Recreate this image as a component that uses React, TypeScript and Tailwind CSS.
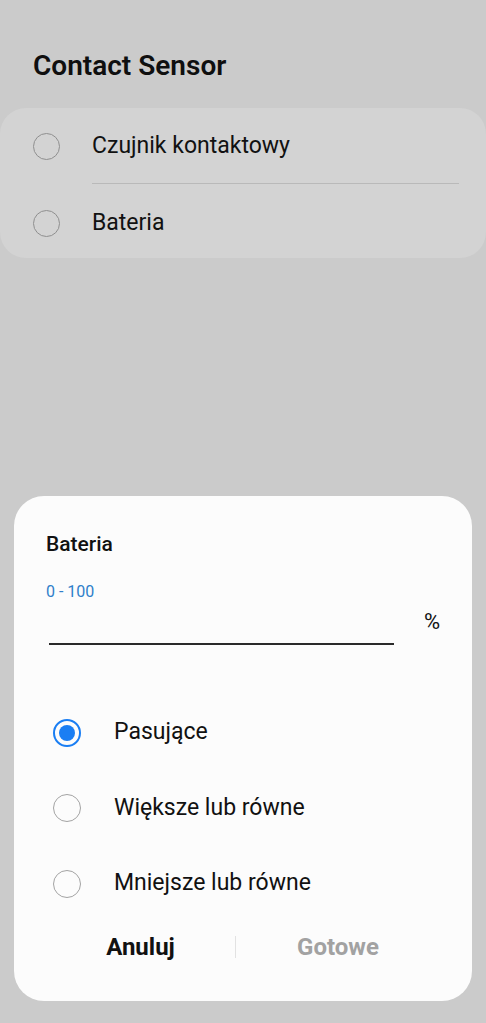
import React from "react";

const font = { fontFamily: "Roboto, 'Noto Sans', 'Liberation Sans', sans-serif" };

function Radio({ checked, dim }: { checked?: boolean; dim?: boolean }) {
  if (checked) {
    return (
      <div className="w-[28px] h-[28px] rounded-full border-2 border-[#1a7ef3] flex items-center justify-center shrink-0">
        <div className="w-[16px] h-[16px] rounded-full bg-[#1a7ef3]" />
      </div>
    );
  }
  return (
    <div
      className={
        "rounded-full border-[1.5px] shrink-0 " +
        (dim ? "w-[27px] h-[27px] border-[#8f8f8f]" : "w-[28px] h-[28px] border-[#a3a3a3]")
      }
    />
  );
}

export default function App() {
  return (
    <div className="w-[486px] h-[1023px] bg-[#cbcbcb] flex flex-col overflow-hidden" style={font}>
      <div className="pt-[48px] pl-[33px] h-[108px]">
        <div className="text-[28px] leading-[36px] font-semibold text-[#0f0f0f]">Contact Sensor</div>
      </div>

      <div className="mx-0 bg-[#d3d3d3] rounded-[26px] h-[150px] flex flex-col">
        <div className="flex items-center h-[75px] pl-[33px] pt-[2px]">
          <Radio dim />
          <div className="ml-[32px] text-[23px] text-[#111]">Czujnik kontaktowy</div>
        </div>
        <div className="ml-[92px] mr-[27px] h-[1px] bg-[#b9b9b9]" />
        <div className="flex items-center h-[74px] pl-[33px] pt-[4px]">
          <Radio dim />
          <div className="ml-[32px] text-[23px] text-[#111]">Bateria</div>
        </div>
      </div>

      <div className="mt-[238px] mx-[14px] bg-[#fcfcfc] rounded-[30px] h-[505px] flex flex-col px-[32px]">
        <div className="pt-[35px] text-[21px] leading-[26px] font-medium text-[#111]">Bateria</div>
        <div className="mt-[25px] text-[16px] leading-[20px] text-[#2f7fca]">0 - 100</div>
        <div className="flex items-end h-[43px]">
          <div className="ml-[3px] w-[345px] h-[2px] bg-[#2a2a2a]" />
          <div className="ml-auto mb-[10px] text-[22px] leading-[26px] text-[#111]">%</div>
        </div>

        <div className="mt-[50px] flex flex-col">
          <div className="flex items-center h-[75px] pl-[7px]">
            <Radio checked />
            <div className="ml-[33px] text-[23px] text-[#111]">Pasujące</div>
          </div>
          <div className="flex items-center h-[76px] pl-[7px]">
            <Radio />
            <div className="ml-[33px] text-[23px] text-[#111]">Większe lub równe</div>
          </div>
          <div className="flex items-center h-[75px] pl-[7px]">
            <Radio />
            <div className="ml-[33px] text-[23px] text-[#111]">Mniejsze lub równe</div>
          </div>
        </div>

        <div className="flex items-center h-[52px]">
          <div className="w-[189px] text-center text-[24px] font-bold text-[#111]">Anuluj</div>
          <div className="w-[1px] h-[22px] bg-[#e2e2e2]" />
          <div className="flex-1 text-center text-[24px] font-bold text-[#a2a2a2]">Gotowe</div>
        </div>
      </div>
    </div>
  );
}
